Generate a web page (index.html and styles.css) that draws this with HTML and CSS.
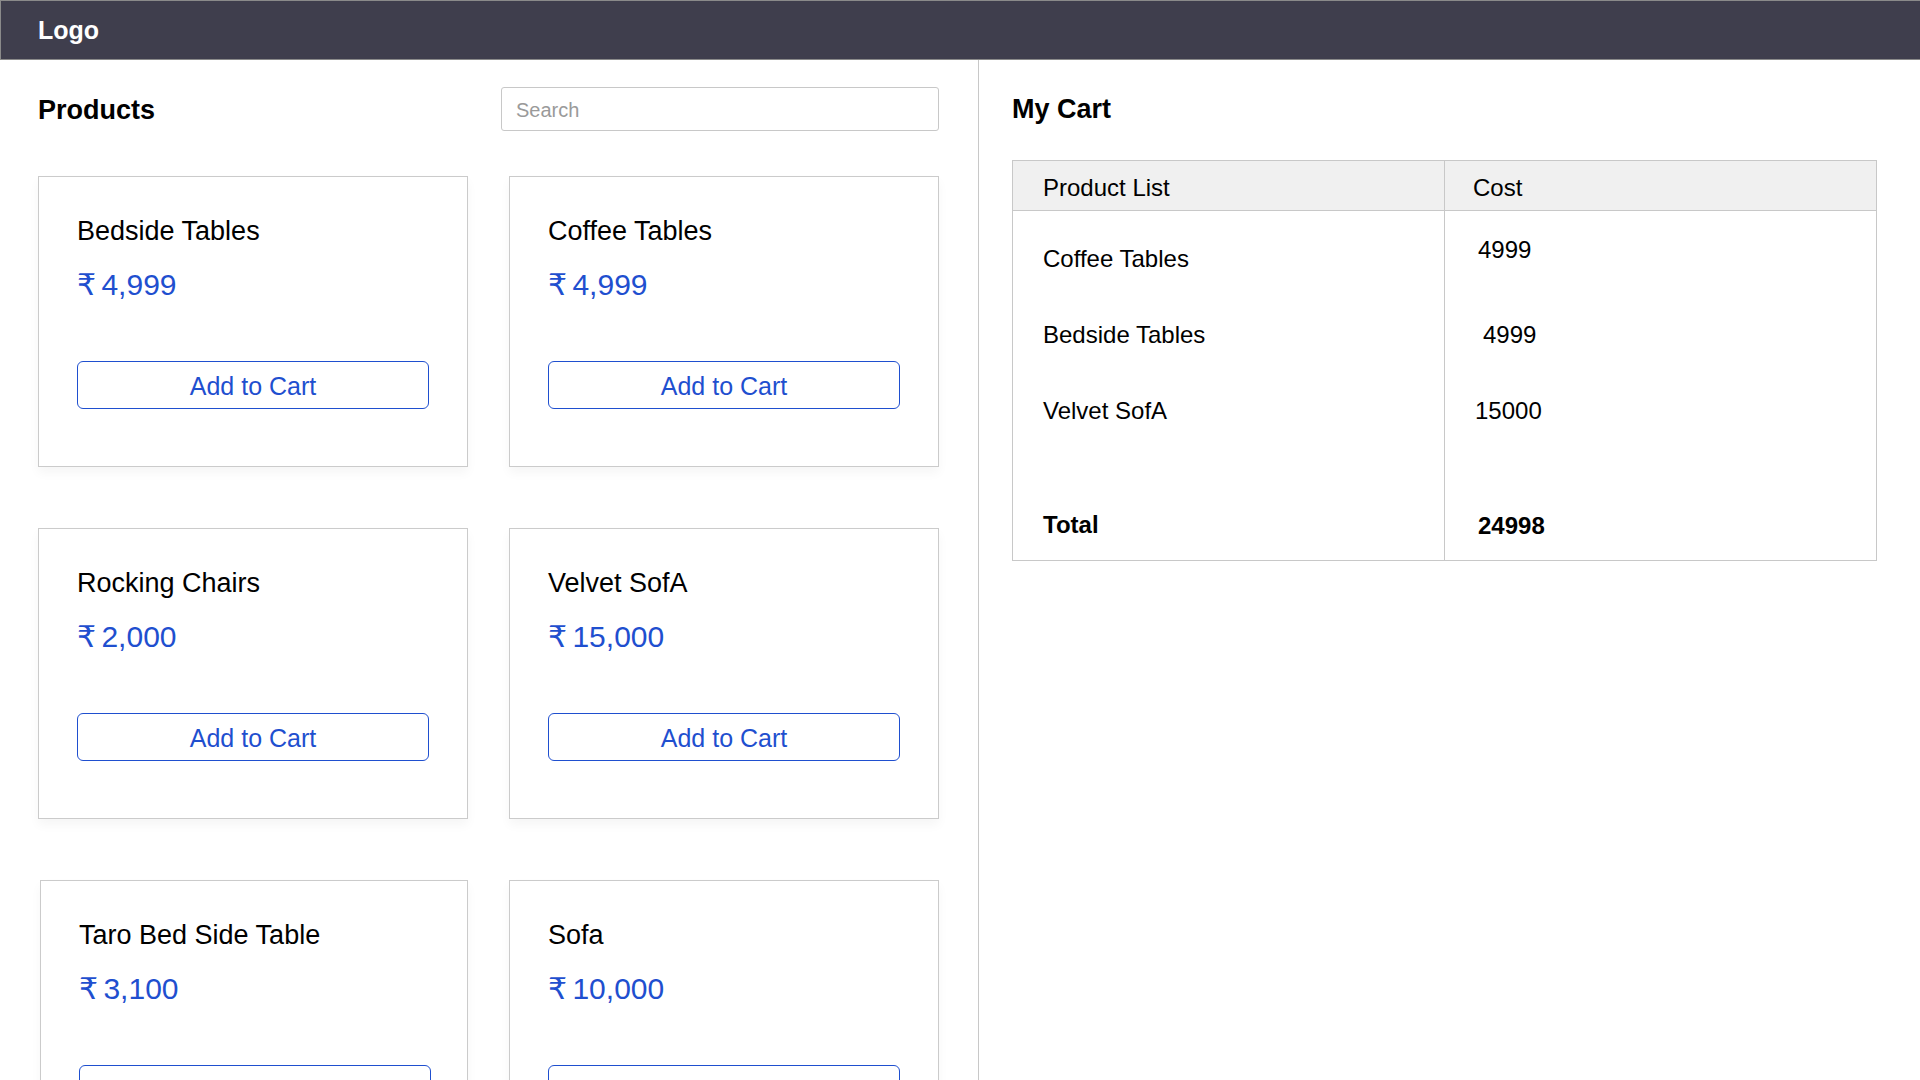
FILE: index.html
```html
<!DOCTYPE html>
<html lang="en">
<head>
<meta charset="utf-8">
<title>Products</title>
<link rel="stylesheet" href="styles.css">
</head>
<body>
<header class="topbar"><span class="logo">Logo</span></header>
<main class="layout">
  <section class="products">
    <div class="products-head">
      <h2 class="section-title">Products</h2>
      <input class="search" type="text" placeholder="Search">
    </div>
    <div class="grid">
      <div class="card">
        <div class="card-title">Bedside Tables</div>
        <div class="card-price"><span class="rupee">₹</span> 4,999</div>
        <button class="add-btn">Add to Cart</button>
      </div>
      <div class="card">
        <div class="card-title">Coffee Tables</div>
        <div class="card-price"><span class="rupee">₹</span> 4,999</div>
        <button class="add-btn">Add to Cart</button>
      </div>
      <div class="card">
        <div class="card-title">Rocking Chairs</div>
        <div class="card-price"><span class="rupee">₹</span> 2,000</div>
        <button class="add-btn">Add to Cart</button>
      </div>
      <div class="card">
        <div class="card-title">Velvet SofA</div>
        <div class="card-price"><span class="rupee">₹</span> 15,000</div>
        <button class="add-btn">Add to Cart</button>
      </div>
      <div class="card card-nudge">
        <div class="card-title">Taro Bed Side Table</div>
        <div class="card-price"><span class="rupee">₹</span> 3,100</div>
        <button class="add-btn">Add to Cart</button>
      </div>
      <div class="card">
        <div class="card-title">Sofa</div>
        <div class="card-price"><span class="rupee">₹</span> 10,000</div>
        <button class="add-btn">Add to Cart</button>
      </div>
    </div>
  </section>
  <section class="cart">
    <h2 class="section-title cart-title">My Cart</h2>
    <table class="cart-table">
      <thead>
        <tr><th class="col-name">Product List</th><th class="col-cost">Cost</th></tr>
      </thead>
      <tbody>
        <tr class="row-first"><td class="name">Coffee Tables</td><td class="cost">4999</td></tr>
        <tr><td class="name">Bedside Tables</td><td class="cost cost-shift">4999</td></tr>
        <tr><td class="name">Velvet SofA</td><td class="cost cost-left">15000</td></tr>
        <tr class="row-total"><td class="name">Total</td><td class="cost">24998</td></tr>
      </tbody>
    </table>
  </section>
</main>
</body>
</html>
```
FILE: styles.css
```css
* { box-sizing: border-box; }
html, body { margin: 0; padding: 0; }
body {
  font-family: "Liberation Sans", Arial, "DejaVu Sans", sans-serif;
  color: #000;
  background: #fff;
  width: 1920px;
  height: 1080px;
  overflow: hidden;
}
.topbar {
  height: 60px;
  background: #3f3e4d;
  border: 1px solid #8a8a8a;
  border-right: none;
  display: flex;
  align-items: center;
  padding-left: 37px;
}
.logo {
  color: #fff;
  font-weight: bold;
  font-size: 25px;
  line-height: 28px;
  margin-top: -1px;
}
.layout {
  display: flex;
  height: 1020px;
}
.products {
  width: 979px;
  border-right: 1px solid #c8c8c8;
  padding: 27px 39px 0 38px;
}
.products-head {
  display: flex;
  align-items: center;
  justify-content: space-between;
  height: 44px;
  margin-bottom: 45px;
}
.section-title {
  margin: 0;
  font-size: 27px;
  line-height: 30px;
  font-weight: bold;
}
.products-head .section-title { margin-top: 2px; }
.search {
  width: 438px;
  height: 44px;
  border: 1px solid #c8c8c8;
  border-radius: 3px;
  padding: 2px 14px 0 14px;
  font-family: inherit;
  font-size: 20px;
  color: #333;
  outline: none;
}
.search::placeholder { color: #9a9a9a; }
.grid {
  display: grid;
  grid-template-columns: 430px 430px;
  column-gap: 41px;
  row-gap: 61px;
}
.card {
  height: 291px;
  border: 1px solid #cbcbcb;
  box-shadow: 0 6px 10px rgba(0, 0, 0, 0.04);
  padding: 39px 38px 0 38px;
  background: #fff;
}
.card-nudge { margin-left: 2px; }
.card-title {
  font-size: 27px;
  line-height: 31px;
}
.card-price {
  margin-top: 21px;
  font-size: 30px;
  line-height: 34px;
  color: #1f4fcf;
}
.rupee { margin-right: -3px; }
.add-btn {
  display: block;
  margin-top: 59px;
  width: 352px;
  height: 48px;
  border: 1.5px solid #1f4fcf;
  border-radius: 6px;
  background: #fff;
  color: #1f4fcf;
  font-family: inherit;
  font-size: 25px;
  padding: 3px 0 0 0;
}
.cart {
  flex: 1;
  padding: 0 44px 0 33px;
}
.cart-title {
  margin: 34px 0 36px 0;
}
.cart-table {
  width: 865px;
  border-collapse: collapse;
  border: 1px solid #c8c8c8;
  table-layout: fixed;
}
.cart-table th {
  height: 50px;
  background: #f0f0f0;
  font-weight: normal;
  text-align: left;
  font-size: 24px;
  border-bottom: 1px solid #c8c8c8;
  padding: 4px 0 0 0;
}
.col-name { width: 432px; padding-left: 30px !important; border-right: 1px solid #c8c8c8; }
.col-cost { padding-left: 28px !important; }
.cart-table td {
  font-size: 24px;
  height: 76px;
  vertical-align: middle;
  padding: 0;
}
.cart-table td.name { padding-left: 30px; padding-top: 0; border-right: 1px solid #c8c8c8; }
.cart-table td.cost { padding-left: 33px; }
.row-first td { height: 86px; }
.row-first td.name { padding-top: 10px; }
.row-first td.cost { padding-top: 0; padding-bottom: 8px; }
.cost-shift { padding-left: 38px !important; }
.cost-left { padding-left: 30px !important; }
.row-total td {
  height: 112px;
  vertical-align: bottom;
  padding-bottom: 20px;
  font-weight: bold;
}
.row-total td.name { padding-top: 0; padding-bottom: 21px; }
```
